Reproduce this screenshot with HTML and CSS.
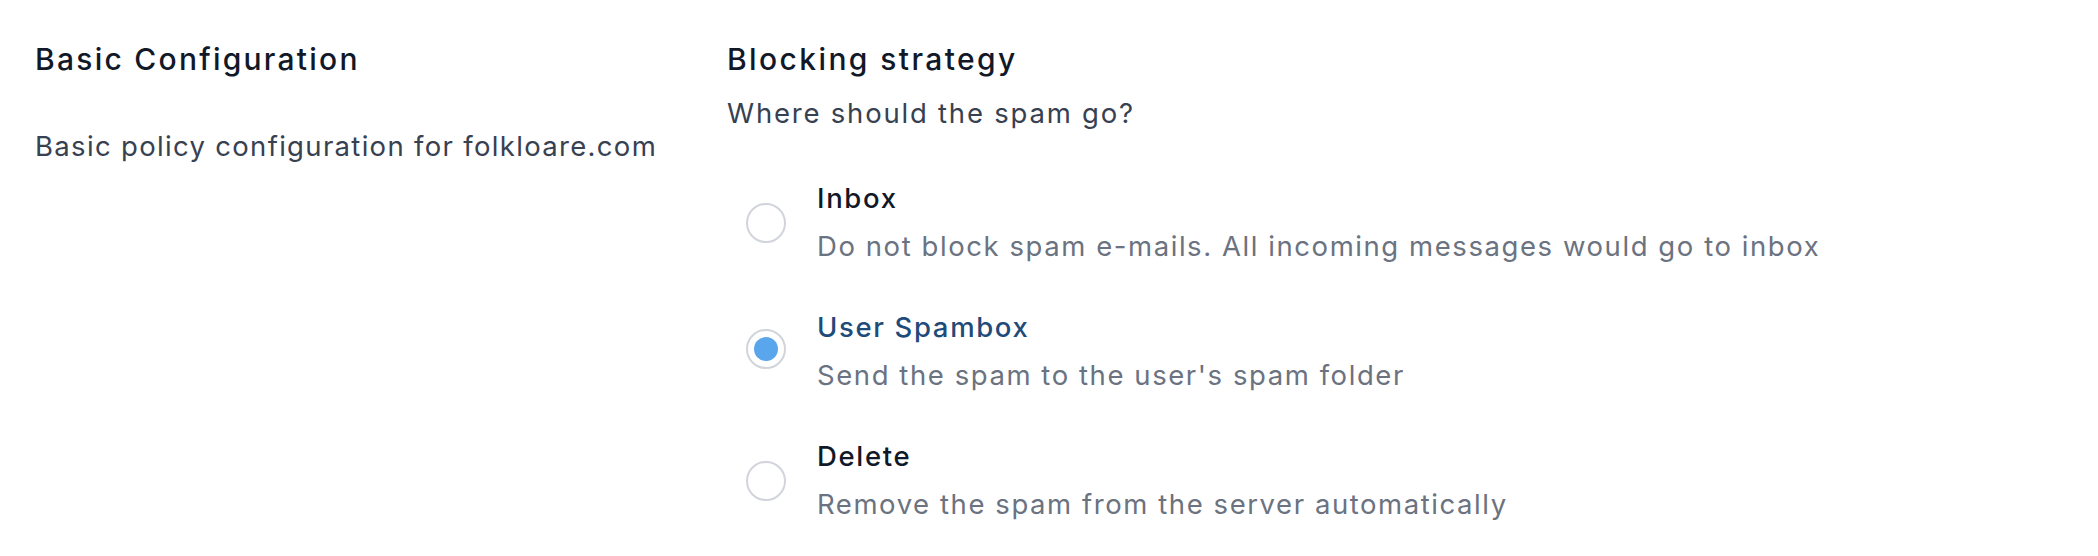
FILE: index.html
```html
<!DOCTYPE html>
<html lang="en">
<head>
<meta charset="utf-8">
<title>Basic Configuration</title>
<link rel="stylesheet" href="styles.css">
</head>
<body>
<div class="page">
  <section class="intro">
    <h2 class="section-title">Basic Configuration</h2>
    <p class="intro-text">Basic policy configuration for folkloare.com</p>
  </section>
  <section class="strategy">
    <h2 class="section-title">Blocking strategy</h2>
    <p class="question">Where should the spam go?</p>
    <div class="options">
      <label class="option">
        <span class="radio"></span>
        <span class="option-text">
          <span class="option-title">Inbox</span>
          <span class="option-desc">Do not block spam e-mails. All incoming messages would go to inbox</span>
        </span>
      </label>
      <label class="option option-checked">
        <span class="radio radio-checked"><span class="radio-dot"></span></span>
        <span class="option-text">
          <span class="option-title">User Spambox</span>
          <span class="option-desc">Send the spam to the user's spam folder</span>
        </span>
      </label>
      <label class="option">
        <span class="radio"></span>
        <span class="option-text">
          <span class="option-title">Delete</span>
          <span class="option-desc">Remove the spam from the server automatically</span>
        </span>
      </label>
    </div>
  </section>
</div>
</body>
</html>
```
FILE: styles.css
```css
html, body {
  margin: 0;
  padding: 0;
  background: #ffffff;
}

body {
  font-family: "Inter", "Open Sans", "Liberation Sans", sans-serif;
  color: #111827;
}

.page {
  display: grid;
  grid-template-columns: 644px 1fr;
  column-gap: 48px;
  padding: 39px 35px 0 35px;
}

.section-title {
  margin: 0;
  font-size: 30px;
  line-height: 40px;
  font-weight: 500;
  letter-spacing: 0.08em;
  color: #111827;
}

.intro .section-title {
  letter-spacing: 0.075em;
}

.intro-text {
  margin: 47px 0 0 0;
  font-size: 27.5px;
  line-height: 40px;
  font-weight: 400;
  letter-spacing: 0.048em;
  color: #374151;
}

.question {
  margin: 14px 0 0 0;
  font-size: 27.5px;
  line-height: 40px;
  font-weight: 400;
  letter-spacing: 0.065em;
  color: #374151;
}

.options {
  display: flex;
  flex-direction: column;
  gap: 41px;
  margin-top: 45px;
}

.option {
  display: flex;
  align-items: center;
  gap: 31px;
  padding-left: 19px;
}

.radio {
  flex: none;
  box-sizing: border-box;
  width: 40px;
  height: 40px;
  margin-top: 2px;
  border: 2px solid #d1d5db;
  border-radius: 50%;
  display: flex;
  align-items: center;
  justify-content: center;
  background: #ffffff;
}

.radio-checked {
  margin-top: -4px;
}

.radio-dot {
  width: 24px;
  height: 24px;
  border-radius: 50%;
  background: #5aa6ec;
}

.option-text {
  display: flex;
  flex-direction: column;
  gap: 8px;
}

.option-title {
  font-size: 27.5px;
  line-height: 40px;
  font-weight: 500;
  letter-spacing: 0.06em;
  color: #111827;
}

.option-checked .option-title {
  color: #1f4b7a;
}

.option-desc {
  font-size: 27.5px;
  line-height: 40px;
  font-weight: 400;
  letter-spacing: 0.057em;
  color: #6b7280;
}
```
